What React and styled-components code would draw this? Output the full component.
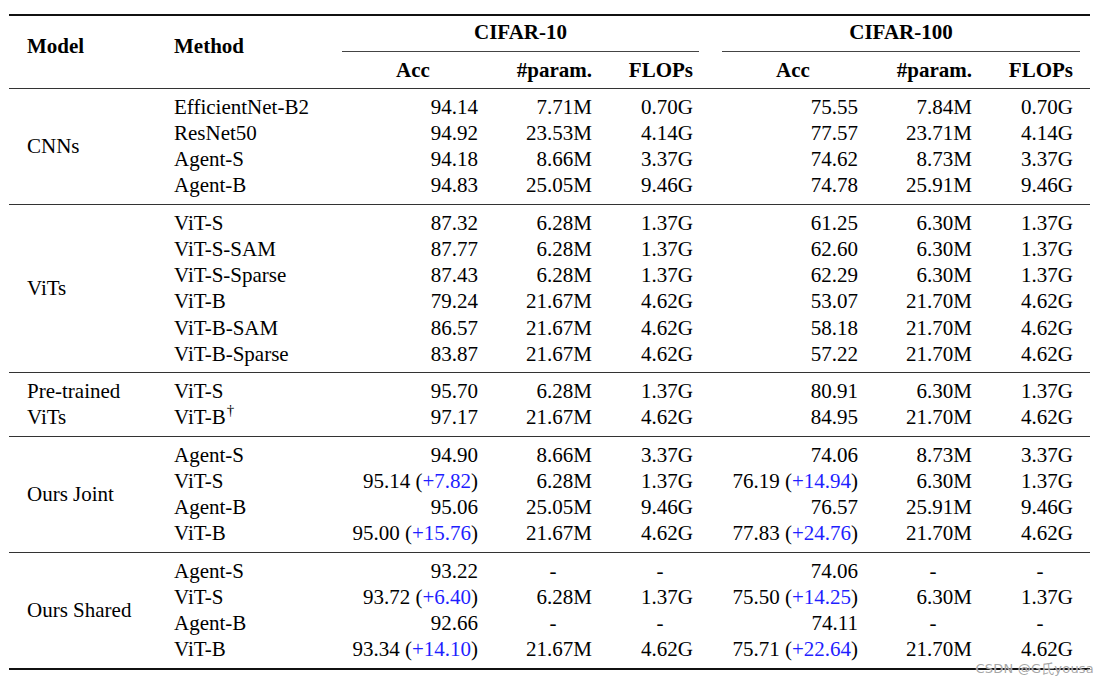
import React from "react";
import styled, { createGlobalStyle } from "styled-components";

const GlobalStyle = createGlobalStyle`
  html, body {
    margin: 0;
    padding: 0;
    background: #fff;
  }
`;

const Page = styled.div`
  position: relative;
  width: 1110px;
  height: 687px;
  padding: 14px 0 0 9px;
  box-sizing: border-box;
  font-family: "Liberation Serif", "Times New Roman", serif;
  color: #000;
  overflow: hidden;
`;

const Table = styled.table`
  width: 1081px;
  table-layout: fixed;
  border-collapse: collapse;
  border-top: 2px solid #111;
  border-bottom: 2px solid #111;
  font-size: 21px;
  line-height: 26.25px;
`;

const Head = styled.thead`
  border-bottom: 1px solid #333;

  th {
    font-weight: bold;
    padding: 0;
  }
`;

const Section = styled.tbody`
  border-bottom: 1px solid #333;

  &:last-child {
    border-bottom: none;
  }

  & > tr:first-child > td {
    padding-top: 5px;
  }

  & > tr:last-child > td {
    padding-bottom: 5px;
  }
`;

const LabelHead = styled.th`
  text-align: left;
  vertical-align: top;
  padding-top: 17px !important;
  padding-left: ${({ $pl }) => $pl}px !important;
`;

const GroupHead = styled.th`
  padding: 3px 0 0 0 !important;
  vertical-align: top;
`;

const GroupTitle = styled.div`
  text-align: center;
  padding-bottom: 6px;
  border-bottom: 1px solid #444;
  margin: 0 ${({ $mr }) => $mr}px 0 ${({ $ml }) => $ml}px;
`;

const SubHead = styled.th`
  text-align: ${({ $center }) => ($center ? "center" : "right")};
  padding: 5px ${({ $pr }) => $pr}px 4px ${({ $pl }) => $pl || 0}px !important;
`;

const ModelCell = styled.td`
  text-align: left;
  vertical-align: middle;
  padding: 0 0 5px 18px;
`;

const MethodCell = styled.td`
  text-align: left;
  padding: 0 0 0 14px;
  white-space: nowrap;
`;

const NumCell = styled.td`
  text-align: right;
  padding: 0 ${({ $pr }) => $pr}px 0 0;
  white-space: nowrap;
`;

const Gain = styled.span`
  color: #1f1fff;
`;

const Dash = styled.span`
  display: inline-block;
  width: ${({ $w }) => $w}px;
  text-align: center;
`;

const Dagger = styled.sup`
  font-size: 15px;
  line-height: 0;
  vertical-align: 9px;
  margin-left: 1px;
`;

const Watermark = styled.div`
  position: absolute;
  right: 16px;
  bottom: 10px;
  font-family: "DejaVu Sans", "Noto Sans CJK SC", sans-serif;
  font-size: 13px;
  line-height: 16px;
  color: rgba(150, 150, 150, 0.85);
  text-shadow: 0 0 1px #fff;
  letter-spacing: 0.2px;
`;

const sections = [
  {
    model: ["CNNs"],
    rows: [
      ["EfficientNet-B2", "94.14", "7.71M", "0.70G", "75.55", "7.84M", "0.70G"],
      ["ResNet50", "94.92", "23.53M", "4.14G", "77.57", "23.71M", "4.14G"],
      ["Agent-S", "94.18", "8.66M", "3.37G", "74.62", "8.73M", "3.37G"],
      ["Agent-B", "94.83", "25.05M", "9.46G", "74.78", "25.91M", "9.46G"],
    ],
  },
  {
    model: ["ViTs"],
    rows: [
      ["ViT-S", "87.32", "6.28M", "1.37G", "61.25", "6.30M", "1.37G"],
      ["ViT-S-SAM", "87.77", "6.28M", "1.37G", "62.60", "6.30M", "1.37G"],
      ["ViT-S-Sparse", "87.43", "6.28M", "1.37G", "62.29", "6.30M", "1.37G"],
      ["ViT-B", "79.24", "21.67M", "4.62G", "53.07", "21.70M", "4.62G"],
      ["ViT-B-SAM", "86.57", "21.67M", "4.62G", "58.18", "21.70M", "4.62G"],
      ["ViT-B-Sparse", "83.87", "21.67M", "4.62G", "57.22", "21.70M", "4.62G"],
    ],
  },
  {
    model: ["Pre-trained", "ViTs"],
    rows: [
      ["ViT-S", "95.70", "6.28M", "1.37G", "80.91", "6.30M", "1.37G"],
      ["ViT-B†", "97.17", "21.67M", "4.62G", "84.95", "21.70M", "4.62G"],
    ],
  },
  {
    model: ["Ours Joint"],
    rows: [
      ["Agent-S", "94.90", "8.66M", "3.37G", "74.06", "8.73M", "3.37G"],
      ["ViT-S", ["95.14", "+7.82"], "6.28M", "1.37G", ["76.19", "+14.94"], "6.30M", "1.37G"],
      ["Agent-B", "95.06", "25.05M", "9.46G", "76.57", "25.91M", "9.46G"],
      ["ViT-B", ["95.00", "+15.76"], "21.67M", "4.62G", ["77.83", "+24.76"], "21.70M", "4.62G"],
    ],
  },
  {
    model: ["Ours Shared"],
    rows: [
      ["Agent-S", "93.22", "-", "-", "74.06", "-", "-"],
      ["ViT-S", ["93.72", "+6.40"], "6.28M", "1.37G", ["75.50", "+14.25"], "6.30M", "1.37G"],
      ["Agent-B", "92.66", "-", "-", "74.11", "-", "-"],
      ["ViT-B", ["93.34", "+14.10"], "21.67M", "4.62G", ["75.71", "+22.64"], "21.70M", "4.62G"],
    ],
  },
];

// right padding of each numeric column, and the width dashes centre in
const numCols = [
  { pr: 7 },
  { pr: 7, dash: 78 },
  { pr: 7, dash: 66 },
  { pr: 7 },
  { pr: 7, dash: 78 },
  { pr: 17, dash: 66 },
];

const Value = ({ value, dash }) => {
  if (Array.isArray(value)) {
    return (
      <>
        {value[0]} (<Gain>{value[1]}</Gain>)
      </>
    );
  }
  if (value === "-") return <Dash $w={dash}>-</Dash>;
  return value;
};

const Method = ({ name }) =>
  name.endsWith("†") ? (
    <>
      {name.slice(0, -1)}
      <Dagger>†</Dagger>
    </>
  ) : (
    name
  );

const App = () => {
  return (
    <Page>
      <GlobalStyle />
      <Table>
        <colgroup>
          <col style={{ width: 151 }} />
          <col style={{ width: 182 }} />
          <col style={{ width: 143 }} />
          <col style={{ width: 114 }} />
          <col style={{ width: 101 }} />
          <col style={{ width: 165 }} />
          <col style={{ width: 114 }} />
          <col style={{ width: 111 }} />
        </colgroup>
        <Head>
          <tr>
            <LabelHead rowSpan={2} $pl={18}>
              Model
            </LabelHead>
            <LabelHead rowSpan={2} $pl={14}>
              Method
            </LabelHead>
            <GroupHead colSpan={3}>
              <GroupTitle $ml={0} $mr={1}>
                CIFAR-10
              </GroupTitle>
            </GroupHead>
            <GroupHead colSpan={3}>
              <GroupTitle $ml={22} $mr={10}>
                CIFAR-100
              </GroupTitle>
            </GroupHead>
          </tr>
          <tr>
            <SubHead $center $pl={6} $pr={7}>
              Acc
            </SubHead>
            <SubHead $pr={7}>#param.</SubHead>
            <SubHead $pr={7}>FLOPs</SubHead>
            <SubHead $center $pl={28} $pr={7}>
              Acc
            </SubHead>
            <SubHead $pr={7}>#param.</SubHead>
            <SubHead $pr={17}>FLOPs</SubHead>
          </tr>
        </Head>
        {sections.map((section, si) => (
          <Section key={si}>
            {section.rows.map((row, ri) => (
              <tr key={ri}>
                {ri === 0 && (
                  <ModelCell rowSpan={section.rows.length}>
                    {section.model.map((line, li) => (
                      <div key={li}>{line}</div>
                    ))}
                  </ModelCell>
                )}
                <MethodCell>
                  <Method name={row[0]} />
                </MethodCell>
                {row.slice(1).map((value, ci) => (
                  <NumCell key={ci} $pr={numCols[ci].pr}>
                    <Value value={value} dash={numCols[ci].dash} />
                  </NumCell>
                ))}
              </tr>
            ))}
          </Section>
        ))}
      </Table>
      <Watermark>CSDN @G氏yousa</Watermark>
    </Page>
  );
};

export default App;
